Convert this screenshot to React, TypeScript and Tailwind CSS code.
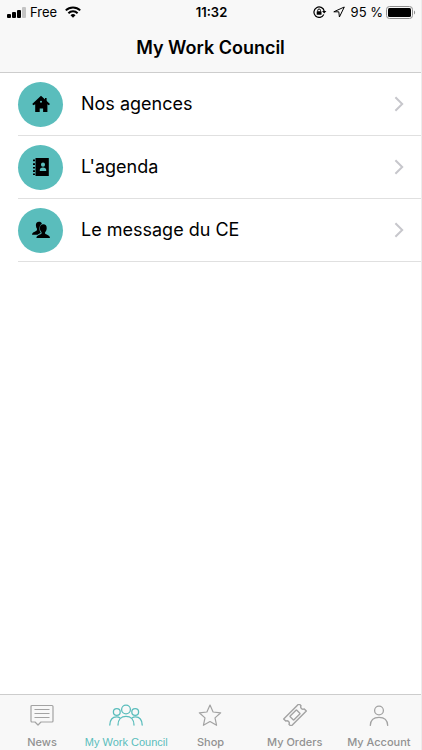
import React, { useState } from 'react';
import clsx from 'clsx';

interface MenuEntry {
  id: string;
  label: string;
  icon: React.ReactNode;
}

interface TabEntry {
  id: string;
  label: string;
  icon: React.ReactNode;
}

const HomeIcon = () => (
  <svg viewBox="0 0 18 18" className="w-[18px] h-[18px]" fill="currentColor" fillRule="evenodd">
    <path d="M9 .8 18 9l-1.200 1.200-1.400-1V17h-4.300v-3.400H7.700V17H3.200V9.200l-1.700 1L.2 9zM9 5.800a1 1 0 1 0 0 2 1 1 0 0 0 0-2z" />
    <path d="M13 3h1.600v4H13z" />
  </svg>
);

const AgendaIcon = () => (
  <svg viewBox="0 0 18 18" className="w-[18px] h-[18px]" fill="currentColor" fillRule="evenodd">
    <path d="M3.500 0h13.300v18H3.500zM11 4.600a2 2 0 1 0 0 4.100 2 2 0 0 0 0-4.100zM7.800 13h6.400v-1.200c0-1.500-1.200-2.400-3.200-2.400s-3.200.9-3.200 2.400z" />
    <path d="M1 1.600h2v1.600H1zM1 5.300h2v1.600H1zM1 9h2v1.600H1zM1 12.300h2v1.600H1zM1 15.500h2v1.600H1z" />
  </svg>
);

const PeopleIcon = () => (
  <svg viewBox="0 0 18 18" className="w-[18px] h-[18px]" fill="currentColor">
    <path d="M7 .8C4.900.8 3.700 2.300 3.900 4.400c.1 1.500.5 2.600 1.200 3.500-.1 1.200-.6 1.800-1.600 2.300C1.700 11.100.1 11.600 0 13.800h5.600c.9-.9 2.200-1.200 3.300-1.700-.9-1.400-1.500-3-1.400-4.900.1-2.200.9-3.600 2.400-4.500C9.400 1.400 8.500.8 7 .8z" />
    <path d="M11.300 3.300c-2.300 0-3.500 1.600-3.400 3.900.1 1.600.6 3 1.600 3.900v1.400c-.5 1.200-4.800 1.200-5.100 4.400H18c-.3-3.200-4.300-3.200-4.900-4.400v-1.400c1-.9 1.500-2.300 1.600-3.900.1-2.300-1.100-3.900-3.400-3.900z" />
  </svg>
);

const ChevronIcon = () => (
  <svg viewBox="0 0 10 16" className="w-[10px] h-4 text-[#c7c7cc]" fill="none" stroke="currentColor" strokeWidth="2">
    <path d="M1.400 1.300 8.200 8l-6.800 6.700" />
  </svg>
);

const NewsIcon = () => (
  <svg viewBox="0 0 24 22" className="w-6 h-[22px]" fill="none" stroke="currentColor" strokeLinejoin="round">
    <path d="M2 1.500h20a1 1 0 0 1 1 1v14.500a1 1 0 0 1-1 1H11l-3 3-3-3H2a1 1 0 0 1-1-1V2.500a1 1 0 0 1 1-1z" strokeWidth="1.200" />
    <path d="M4.500 5.500h15M4.500 9.500h15M4.500 13.500h15" />
  </svg>
);

const CouncilIcon = () => (
  <svg viewBox="0 0 34 22" className="w-[34px] h-[22px]" fill="none" stroke="currentColor" strokeWidth="1.300" strokeLinecap="round">
    <circle cx="17" cy="5.500" r="4.400" />
    <circle cx="7.800" cy="8" r="3.400" />
    <circle cx="26.200" cy="8" r="3.400" />
    <path d="M9 21c0-5.500 3.200-8.700 8-8.700s8 3.200 8 8.700M.8 21c.2-5 2.600-8.200 6.700-8.200 1.400 0 2.600.4 3.500 1.200M33.200 21c-.2-5-2.600-8.200-6.700-8.200-1.400 0-2.600.4-3.500 1.200" />
  </svg>
);

const ShopIcon = () => (
  <svg viewBox="0 0 24 22" className="w-6 h-[22px]" fill="none" stroke="currentColor" strokeWidth="1.200" strokeLinejoin="round">
    <path d="m12 1 3.100 7 7.600.8-5.700 5.100 1.600 7.400-6.600-3.800-6.600 3.800L7 13.900 1.300 8.800 8.900 8z" />
  </svg>
);

const OrdersIcon = () => (
  <svg viewBox="0 0 24 22" className="w-6 h-[22px]" fill="none" stroke="currentColor" strokeWidth="1.400" strokeLinejoin="round">
    <g transform="rotate(-45 12 11)">
      <path d="M1.200 5.800h21.600v2.900a2.400 2.400 0 0 0 0 4.600v2.900H1.200v-2.900a2.400 2.400 0 0 0 0-4.600z" />
      <rect x="7.300" y="8.300" width="9.400" height="5.400" rx=".6" />
    </g>
  </svg>
);

const AccountIcon = () => (
  <svg viewBox="0 0 24 22" className="w-6 h-[22px]" fill="none" stroke="currentColor" strokeWidth="1.300" strokeLinecap="round">
    <circle cx="12" cy="6.500" r="4.400" />
    <path d="M3.300 21.400c.2-5.200 3.600-8.100 8.700-8.100s8.500 2.900 8.700 8.100" />
  </svg>
);

const entries: MenuEntry[] = [
  { id: 'agencies', label: 'Nos agences', icon: <HomeIcon /> },
  { id: 'agenda', label: "L'agenda", icon: <AgendaIcon /> },
  { id: 'message', label: 'Le message du CE', icon: <PeopleIcon /> },
];

const tabs: TabEntry[] = [
  { id: 'news', label: 'News', icon: <NewsIcon /> },
  { id: 'council', label: 'My Work Council', icon: <CouncilIcon /> },
  { id: 'shop', label: 'Shop', icon: <ShopIcon /> },
  { id: 'orders', label: 'My Orders', icon: <OrdersIcon /> },
  { id: 'account', label: 'My Account', icon: <AccountIcon /> },
];

function StatusBar() {
  return (
    <div className="grid grid-cols-[1fr_auto_1fr] items-center h-6 pl-[7px] pr-[5px] text-[13px] leading-4">
      <div className="flex items-center gap-1">
        <svg viewBox="0 0 19 11" className="w-[19px] h-[11px]" fill="currentColor">
          <rect x="0" y="7" width="4" height="4" rx="1" />
          <rect x="5" y="5" width="4" height="6" rx="1" />
          <rect x="10" y="3" width="4" height="8" rx="1" />
          <rect x="15" y="0" width="4" height="11" rx="1" fill="#c4c4c4" />
        </svg>
        <span>Free</span>
        <svg viewBox="0 0 16 12" className="w-4 h-3 ml-1" fill="none" stroke="currentColor" strokeWidth="2">
          <path d="M.8 4.400a10.300 10.300 0 0 1 14.400 0M3.400 7.200a6.600 6.600 0 0 1 9.200 0" />
          <path d="M8 11.800 5.500 9.300a3.600 3.600 0 0 1 5 0z" fill="currentColor" stroke="none" />
        </svg>
      </div>
      <span className="font-semibold">11:32</span>
      <div className="flex items-center justify-end">
        <svg viewBox="0 0 14 12" className="w-[14px] h-3 mr-1.5" fill="none" stroke="currentColor" strokeWidth="1.200">
          <path d="M10.800 8.500A5.200 5.200 0 1 1 11.200 5" />
          <path d="M9 5h4.400l-2.200 2.600z" fill="currentColor" stroke="none" />
          <rect x="3.700" y="5.300" width="4.800" height="3.500" rx=".4" fill="currentColor" stroke="none" />
          <path d="M4.700 5.500V4.400a1.400 1.400 0 0 1 2.800 0v1.100" strokeWidth="1" />
        </svg>
        <svg viewBox="0 0 12 12" className="w-3 h-3 mr-1.5" fill="none" stroke="currentColor" strokeWidth="1" strokeLinejoin="round">
          <path d="M11.300 1 .8 5.800h5l.6 5.200z" />
        </svg>
        <span>95 %</span>
        <svg viewBox="0 0 30 13" className="w-[30px] h-[13px] ml-[3px]">
          <rect x=".5" y=".5" width="26" height="12" rx="3" fill="none" stroke="#8e8e8e" />
          <rect x="2" y="2" width="23" height="9" rx="1.500" fill="#000" />
          <path d="M28 4.500c1.500.5 1.500 3.500 0 4z" fill="#8e8e8e" />
        </svg>
      </div>
    </div>
  );
}

export default function App() {
  const [activeTab, setActiveTab] = useState('council');

  return (
    <div className="flex flex-col min-h-screen bg-white border-r border-[#ececec] text-black font-['Inter',sans-serif]">
      <header className="bg-[#f8f8f8] border-b border-[#cdcdcd]">
        <StatusBar />
        <h1 className="text-center text-lg leading-[48px] font-semibold">My Work Council</h1>
      </header>

      <main className="flex-1">
        <ul className="pl-[18px]">
          {entries.map((entry) => (
            <li key={entry.id} className="border-b border-[#e0e0e0]">
              <button type="button" className="flex items-center w-full h-[62px] pr-[17px] text-left">
                <span className="flex items-center justify-center w-[45px] h-[45px] rounded-full bg-[#5abdbc]">
                  {entry.icon}
                </span>
                <span className="flex-1 ml-[18px] text-lg leading-6">{entry.label}</span>
                <ChevronIcon />
              </button>
            </li>
          ))}
        </ul>
      </main>

      <nav className="grid grid-cols-5 h-14 bg-[#f8f8f8] border-t border-[#cdcdcd]">
        {tabs.map((tab) => (
          <button
            key={tab.id}
            type="button"
            onClick={() => setActiveTab(tab.id)}
            className={clsx(
              'flex flex-col items-center justify-end gap-2 text-[11px] leading-4 whitespace-nowrap',
              activeTab === tab.id
                ? "text-[#5abdbc] font-['Liberation_Sans',sans-serif]"
                : 'text-[#929292] font-medium'
            )}
          >
            <span className={clsx(activeTab !== tab.id && 'text-[#a3a3a3]')}>{tab.icon}</span>
            <span>{tab.label}</span>
          </button>
        ))}
      </nav>
    </div>
  );
}
